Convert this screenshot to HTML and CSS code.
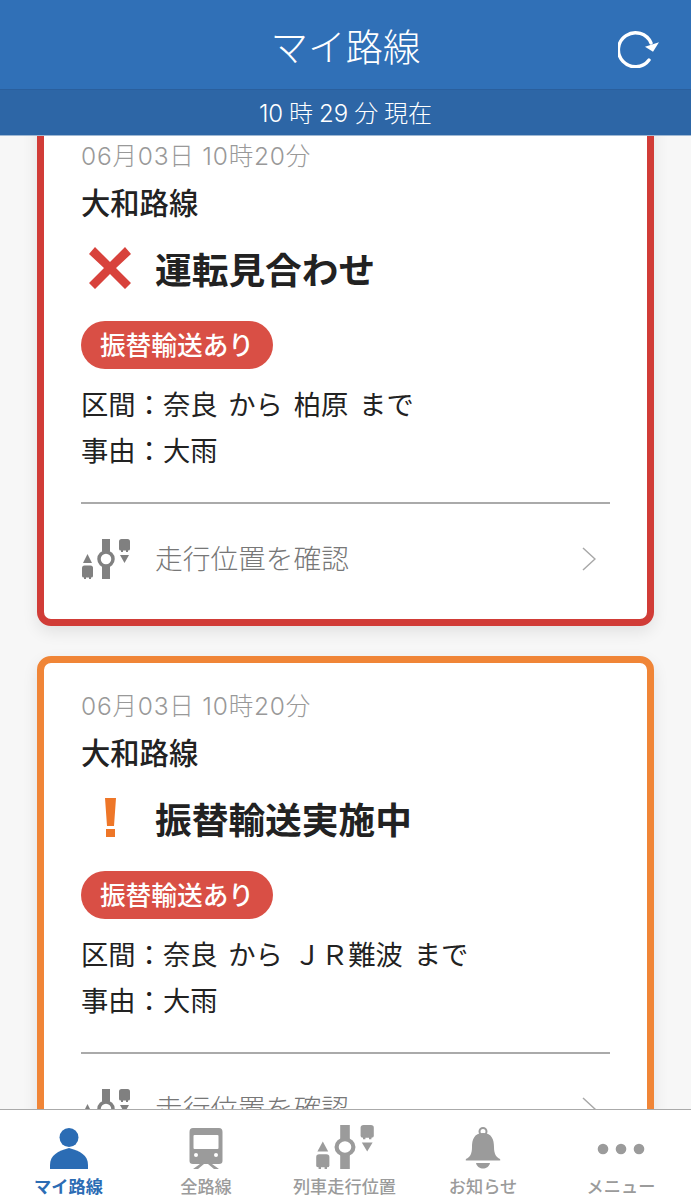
FILE: index.html
```html
<!DOCTYPE html>
<html lang="ja">
<head>
<meta charset="utf-8">
<title>マイ路線</title>
<link rel="stylesheet" href="styles.css">
</head>
<body>
<svg class="defs" width="0" height="0" aria-hidden="true">
  <symbol id="track" viewBox="0 0 50 40" preserveAspectRatio="none">
    <rect x="21" y="0" width="8" height="40"/>
    <circle cx="25" cy="20" r="8" class="hole"/>
    <circle cx="25" cy="20" r="7" fill="none" stroke="currentColor" stroke-width="3.500"/>
    <path d="M2 24 L6.500 15 L11 24Z"/>
    <path d="M1 29 Q1 26.500 3.500 26.500 H9.500 Q12 26.500 12 29 V37 Q12 38.500 10 38.500 H3 Q1 38.500 1 37Z"/>
    <path d="M3 38 h2 v2 h-2z M8 38 h2 v2 h-2z"/>
    <path d="M38 2.500 Q38 0 40.500 0 H46.500 Q49 0 49 2.500 V10 Q49 11.500 47 11.500 H40 Q38 11.500 38 10Z"/>
    <path d="M40 11 h2 v2 h-2z M45 11 h2 v2 h-2z"/>
    <path d="M39 16 H48 L43.500 24Z"/>
  </symbol>
</svg>

<header class="app-header">
  <h1 class="app-title">マイ路線</h1>
  <button class="reload" type="button" aria-label="更新">
    <svg viewBox="0 0 42 40" width="42" height="40">
      <path d="M31 32 A17 17 0 1 1 33 15" fill="none" stroke="#fff" stroke-width="3.400" stroke-linecap="round"/>
      <path d="M41 14.300 L35 23.700 L27 18.700 Z" fill="#fff"/>
    </svg>
  </button>
</header>
<div class="clock">10 時 29 分 現在</div>

<main class="viewport">
  <div class="card-list">
    <article class="card card-stop">
      <p class="stamp">06月03日 10時20分</p>
      <h2 class="line-name">大和路線</h2>
      <div class="status">
        <svg class="status-icon" viewBox="0 0 44 44" width="44" height="44">
          <path d="M1 8 L7 1 L22 16 L37 1 L43 8 L28 22 L43 37 L37 43 L22 28 L7 43 L1 37 L16 22Z" fill="#d8423c"/>
        </svg>
        <span>運転見合わせ</span>
      </div>
      <span class="pill">振替輸送あり</span>
      <p class="detail">区間：奈良 から 柏原 まで</p>
      <p class="detail">事由：大雨</p>
      <a class="position-link">
        <svg class="track-icon"><use href="#track"/></svg>
        <span class="link-text">走行位置を確認</span>
        <svg class="chevron" viewBox="0 0 14 24" width="14" height="24"><path d="M1 1 L13 12 L1 23" fill="none" stroke="#a8a8a8" stroke-width="1.500"/></svg>
      </a>
    </article>

    <article class="card card-warn">
      <p class="stamp">06月03日 10時20分</p>
      <h2 class="line-name">大和路線</h2>
      <div class="status">
        <svg class="status-icon" viewBox="0 0 44 44" width="44" height="44">
          <path d="M17 2 H28 L26 30 H19Z M18 33 H27 V41 H18Z" fill="#ee7628"/>
        </svg>
        <span>振替輸送実施中</span>
      </div>
      <span class="pill">振替輸送あり</span>
      <p class="detail">区間：奈良 から ＪＲ難波 まで</p>
      <p class="detail">事由：大雨</p>
      <a class="position-link">
        <svg class="track-icon"><use href="#track"/></svg>
        <span class="link-text">走行位置を確認</span>
        <svg class="chevron" viewBox="0 0 14 24" width="14" height="24"><path d="M1 1 L13 12 L1 23" fill="none" stroke="#a8a8a8" stroke-width="1.500"/></svg>
      </a>
    </article>
  </div>
</main>

<nav class="tabbar">
  <a class="tab tab-active">
    <svg class="tab-icon" viewBox="0 0 44 44" width="44" height="44">
      <circle cx="22" cy="10.500" r="9.500" fill="#2b6cb4"/>
      <path d="M3 42 V38 C3 28 11 24 22 21 C33 24 41 28 41 38 V42Z" fill="#2b6cb4"/>
    </svg>
    <span>マイ路線</span>
  </a>
  <a class="tab">
    <svg class="tab-icon" viewBox="0 0 44 44" width="44" height="44">
      <path fill="#9b9b9b" fill-rule="evenodd" d="M9 1 H35 Q38.500 1 38.500 5 V34 Q38.500 37 35 37 H9 Q5.500 37 5.500 34 V5 Q5.500 1 9 1Z M10.500 8 Q9.500 8 9.500 9 V21 Q9.500 22 10.500 22 H33.500 Q34.500 22 34.500 21 V9 Q34.500 8 33.500 8Z M10 28 a2 2 0 1 0 4 0 a2 2 0 1 0 -4 0Z M30 28 a2 2 0 1 0 4 0 a2 2 0 1 0 -4 0Z"/>
      <path fill="#9b9b9b" d="M9 42 L16 37 H20 L14 42Z M35 42 L28 37 H24 L30 42Z"/>
    </svg>
    <span>全路線</span>
  </a>
  <a class="tab tab-wide">
    <svg class="tab-track"><use href="#track"/></svg>
    <span>列車走行位置</span>
  </a>
  <a class="tab">
    <svg class="tab-icon" viewBox="0 0 44 44" width="44" height="44">
      <circle cx="22" cy="4.500" r="3.500" fill="none" stroke="#9b9b9b" stroke-width="2"/>
      <path fill="#9b9b9b" d="M22 6 C31 6 33 13 33 20 C33 27 35 30 39 32 Q40 33.500 38.500 33.500 H5.500 Q4 33.500 5 32 C9 30 11 27 11 20 C11 13 13 6 22 6Z"/>
      <path fill="#9b9b9b" d="M15 36 H29 C28 40 25 41.500 22 41.500 C19 41.500 16 40 15 36Z"/>
    </svg>
    <span>お知らせ</span>
  </a>
  <a class="tab">
    <svg class="tab-icon" viewBox="0 0 50 44" width="50" height="44">
      <circle cx="7" cy="22" r="5.300" fill="#9b9b9b"/>
      <circle cx="25" cy="22" r="5.300" fill="#9b9b9b"/>
      <circle cx="43" cy="22" r="5.300" fill="#9b9b9b"/>
    </svg>
    <span>メニュー</span>
  </a>
</nav>
</body>
</html>
```

FILE: styles.css
```css
* { box-sizing: border-box; }

html, body {
  margin: 0;
  height: 100%;
}

body {
  height: 1200px;
  overflow: hidden;
  display: flex;
  flex-direction: column;
  background: #f7f7f7;
  color: #222;
  font-family: "Noto Sans CJK JP", "Noto Sans", sans-serif;
}

.defs { position: absolute; }

.app-header {
  height: 90px;
  flex: none;
  display: flex;
  align-items: center;
  justify-content: center;
  position: relative;
  background: #3070b7;
  border-bottom: 1px solid #2a5f9d;
}

.app-title {
  margin: 0;
  color: #fff;
  font-size: 37.500px;
  font-weight: 300;
  line-height: 1;
}

.reload {
  position: absolute;
  right: 31px;
  top: 28px;
  width: 42px;
  height: 40px;
  padding: 0;
  border: 0;
  background: none;
}

.clock {
  height: 46px;
  flex: none;
  padding-bottom: 3px;
  display: flex;
  align-items: center;
  justify-content: center;
  background: #2d66a6;
  color: #fff;
  font-family: Inter, "Noto Sans CJK JP", sans-serif;
  font-size: 24px;
  font-weight: 300;
  word-spacing: -0.800px;
  border-bottom: 1px solid #9fb8d3;
}

.viewport {
  flex: 1;
  min-height: 0;
  overflow: hidden;
}

.card-list {
  display: flex;
  flex-direction: column;
  gap: 30px;
  margin-top: -30px;
  padding: 0 37px;
}

.card {
  flex: none;
  height: 520px;
  padding: 25px 37px 0;
  background: #fff;
  border: 7px solid;
  border-radius: 14px;
  box-shadow: 0 6px 16px rgba(0, 0, 0, 0.09);
}

.card-stop { border-color: #d13c37; }
.card-warn { border-color: #f08537; }

.stamp {
  margin: 0;
  height: 36px;
  line-height: 36px;
  color: #999;
  font-family: Inter, "Noto Sans CJK JP", sans-serif;
  font-size: 24.500px;
  font-weight: 300;
  letter-spacing: 0.800px;
}

.line-name {
  margin: 7px 0 0;
  height: 40px;
  line-height: 40px;
  font-size: 29.300px;
  font-weight: 500;
}

.status {
  display: flex;
  align-items: center;
  gap: 23px;
  margin-top: 22px;
  height: 50px;
  padding-left: 7px;
  font-size: 36.700px;
  font-weight: 700;
}

.status-icon { flex: none; }

.pill {
  display: inline-block;
  margin-top: 28px;
  width: 192px;
  height: 48px;
  line-height: 46px;
  text-align: center;
  border-radius: 24px;
  background: #d94f45;
  color: #fff;
  font-size: 25.700px;
  font-weight: 500;
}

.detail {
  margin: 0;
  height: 46px;
  line-height: 46px;
  font-size: 27.300px;
  font-weight: 400;
  word-spacing: 4.700px;
}

.pill + .detail { margin-top: 11px; }

.position-link {
  display: flex;
  align-items: center;
  margin-top: 30px;
  height: 108px;
  border-top: 2px solid #aaa;
  color: #777;
  font-size: 27.700px;
  font-weight: 300;
}

.track-icon {
  flex: none;
  width: 50px;
  height: 40px;
  margin-top: 4px;
  margin-right: 24px;
  fill: #808080;
  color: #808080;
}

.hole { fill: #fff; }

.link-text { flex: 1; }

.chevron {
  flex: none;
  margin-top: 4px;
  margin-right: 14px;
}

.tabbar {
  height: 91px;
  flex: none;
  display: flex;
  background: #fff;
  border-top: 1px solid #aaa;
}

.tab {
  width: 138px;
  flex: none;
  display: flex;
  flex-direction: column;
  align-items: center;
  padding-top: 17px;
  color: #9b9b9b;
  font-size: 17.200px;
  font-weight: 500;
}

.tab-wide { width: 139px; }

.tab-active {
  width: 137px;
  color: #2b6cb4;
  font-weight: 700;
}

.tab-icon { flex: none; height: 44px; }

.tab-track {
  flex: none;
  width: 60px;
  height: 44px;
  margin-top: -2px;
  margin-bottom: 2px;
  fill: #9b9b9b;
  color: #9b9b9b;
}

.tab span {
  margin-top: 3px;
  line-height: 24px;
}
```
